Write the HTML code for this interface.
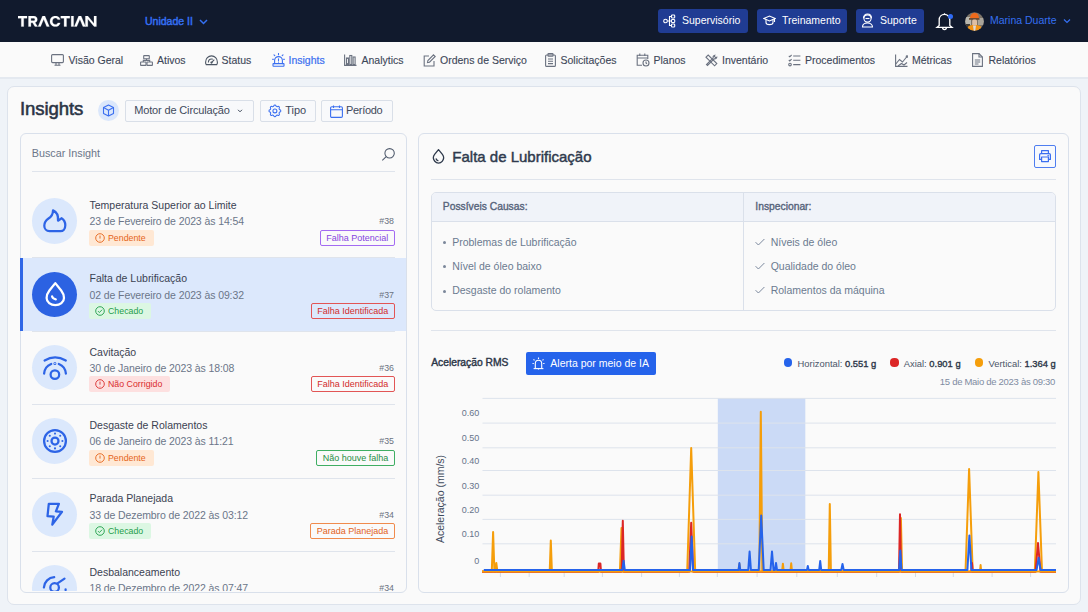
<!DOCTYPE html>
<html><head><meta charset="utf-8">
<style>
*{box-sizing:border-box;margin:0;padding:0}
html,body{width:1088px;height:612px;overflow:hidden}
body{font-family:"Liberation Sans",sans-serif;background:#eff3f8;position:relative;color:#374151}
.abs{position:absolute}
.t{position:absolute;white-space:nowrap;line-height:1}
#hdr{position:absolute;left:0;top:0;width:1088px;height:42px;background:#111a2d}
#nav{position:absolute;left:0;top:42px;width:1088px;height:37px;background:#fafafa;border-bottom:2px solid #e4e9f0}
.nvt{top:12.5px;font-size:10.5px;color:#3d4759;-webkit-text-stroke:0.12px #3d4759}
.hbtn{position:absolute;top:9px;height:24px;background:#203c93;border-radius:3px}
#card{position:absolute;left:7px;top:86px;width:1074px;height:518.5px;background:#fafafa;border:1px solid #dde3ec;border-radius:7px}
#lp{position:absolute;left:20px;top:133px;width:387px;height:459.5px;background:#fafafa;border:1px solid #d9e0eb;border-radius:6px;overflow:hidden}
#rp{position:absolute;left:418px;top:133px;width:650.5px;height:459.5px;background:#fafafa;border:1px solid #d9e0eb;border-radius:6px}
.btnb{background:#f8f9fb;border:1px solid #d9dfe8;border-radius:2px}
.bdg{display:flex;align-items:center;padding:0 8px 0 6px;font-size:8.8px;border-radius:2px;white-space:nowrap}
.tag{display:flex;align-items:center;padding:0 5.5px;font-size:9px;border:1px solid;border-radius:2px;white-space:nowrap;background:transparent}
</style></head><body>
<div id="hdr">
<svg class="abs" style="left:18px;top:16px" width="79" height="11" viewBox="0 0 79 11" fill="#fff" stroke="#fff" stroke-width="0.25">
<path d="M0 0H9V2.2H5.7V10.5H3.3V2.2H0Z"/>
<path d="M10.5 0H15.6C17.9 0 19.3 1.3 19.3 3.4C19.3 5 18.4 6.1 17 6.5L19.6 10.5H16.9L14.6 6.8H12.9V10.5H10.5ZM12.9 2.2V4.7H15.4C16.4 4.7 16.9 4.2 16.9 3.4C16.9 2.7 16.4 2.2 15.4 2.2Z"/>
<path d="M24.5 0H26.9L31.3 10.5H28.7L25.7 3.2L22.6 10.5H20.1Z"/>
<path d="M37.3 -0.1C39.9 -0.1 41.7 1.3 42.2 3.6H39.7C39.3 2.6 38.5 2.1 37.3 2.1C35.5 2.1 34.4 3.4 34.4 5.25C34.4 7.1 35.5 8.4 37.3 8.4C38.5 8.4 39.3 7.9 39.7 6.9H42.2C41.7 9.2 39.9 10.6 37.3 10.6C34.2 10.6 32 8.4 32 5.25C32 2.1 34.2 -0.1 37.3 -0.1Z"/>
<path d="M42.8 0H51.8V2.2H48.5V10.5H46.1V2.2H42.8Z"/>
<path d="M53.2 0H55.6V10.5H53.2Z"/>
<path d="M60.7 0H63.1L67.5 10.5H64.9L61.9 3.2L58.8 10.5H56.3Z"/>
<path d="M67.4 0H69.8L76 7.6V0H78.4V10.5H76.1L69.8 2.9V10.5H67.4Z"/>
</svg>
<span class="t" style="left:145px;top:16.2px;font-size:10.5px;color:#3570f2;-webkit-text-stroke:0.45px #3570f2">Unidade II</span>
<svg class="abs" style="left:199px;top:19px" width="9" height="6" viewBox="0 0 9 6"><path d="M1 1L4.5 4.5L8 1" stroke="#3570f2" stroke-width="1.5" fill="none"/></svg>

<div class="hbtn" style="left:658px;width:90px"></div>
<svg class="abs" style="left:663px;top:14px" width="13" height="14" viewBox="0 0 13 14" fill="none" stroke="#fff" stroke-width="1.1"><circle cx="2.5" cy="7" r="1.8"/><rect x="8.5" y="1" width="3.2" height="3" rx="0.8"/><rect x="8.5" y="5.5" width="3.2" height="3" rx="0.8"/><rect x="8.5" y="10" width="3.2" height="3" rx="0.8"/><path d="M4.3 7H8.5M6.5 7V2.5H8.5M6.5 7V11.5H8.5"/></svg>
<span class="t" style="left:682px;top:15.3px;font-size:10.5px;color:#fff">Supervisório</span>

<div class="hbtn" style="left:757px;width:90px"></div>
<svg class="abs" style="left:763px;top:14px" width="13" height="13" viewBox="0 0 13 13" fill="none" stroke="#fff" stroke-width="1.1"><path d="M0.8 4.5L6.5 2L12.2 4.5L6.5 7Z"/><path d="M3 5.6V8.5C3 9.8 4.6 10.6 6.5 10.6C8.4 10.6 10 9.8 10 8.5V5.6"/><path d="M11.5 4.8V8"/></svg>
<span class="t" style="left:782px;top:15.3px;font-size:10.5px;color:#fff">Treinamento</span>

<div class="hbtn" style="left:856px;width:68px"></div>
<svg class="abs" style="left:861px;top:13px" width="13" height="15" viewBox="0 0 13 15" fill="none" stroke="#fff" stroke-width="1.1"><circle cx="6.5" cy="5.5" r="3.6"/><path d="M2.5 5.2C2.5 2.6 4.3 1 6.5 1C8.7 1 10.5 2.6 10.5 5.2"/><path d="M4.5 5.5H8.5"/><path d="M1.5 14C1.5 11.5 3.5 10 6.5 10C9.5 10 11.5 11.5 11.5 14Z"/></svg>
<span class="t" style="left:880px;top:15.3px;font-size:10.5px;color:#fff">Suporte</span>

<svg class="abs" style="left:935px;top:11px" width="20" height="20" viewBox="0 0 20 20" fill="none" stroke="#fff" stroke-width="1.3"><path d="M9.5 2.2V3.2M4.2 14.5V9C4.2 5.8 6.5 3.4 9.5 3.4C12.5 3.4 14.8 5.8 14.8 9V14.5L17 16.3H2L4.2 14.5Z"/><path d="M7.6 16.5C7.6 17.8 8.4 18.6 9.5 18.6C10.6 18.6 11.4 17.8 11.4 16.5"/></svg>
<div class="abs" style="left:948px;top:14px;width:5px;height:5px;border-radius:50%;background:#2f6bf5"></div>

<svg class="abs" style="left:965.3px;top:11.6px" width="19" height="19" viewBox="0 0 19 19"><defs><clipPath id="avc"><circle cx="9.5" cy="9.5" r="9.3"/></clipPath></defs><g clip-path="url(#avc)">
<rect width="19" height="19" fill="#7d7468"/>
<rect x="0" y="5" width="6" height="8" fill="#b9b7ae"/>
<rect x="13" y="6" width="6" height="7" fill="#a9a49a"/>
<rect x="0" y="12" width="5" height="4" fill="#3d3a36"/>
<path d="M5 6.5C5 3 7 1 10 1C12.5 1 14 3 14 6.5Z" fill="#ee6a1c"/>
<rect x="4" y="6" width="10.5" height="1.8" fill="#6a4a32"/>
<rect x="7.2" y="7.5" width="4.8" height="6.5" rx="1.5" fill="#dfbfa4"/>
<path d="M2 19L3.5 14L7.5 13H11.5L15.5 14L17.5 19Z" fill="#f39416"/>
<path d="M8 13.5H11L10.2 19H8.8Z" fill="#d9d9de"/>
</g></svg>
<span class="t" style="left:990px;top:15.3px;font-size:10.5px;color:#3570f2">Marina Duarte</span>
<svg class="abs" style="left:1063px;top:18px" width="8" height="6" viewBox="0 0 8 6"><path d="M1 1.5L4 4.5L7 1.5" stroke="#3570f2" stroke-width="1.2" fill="none"/></svg>
</div>

<div id="nav">
<!-- monitor -->
<svg class="abs" style="left:51px;top:12px" width="13" height="12" viewBox="0 0 13 12" fill="none" stroke="#6b7280" stroke-width="1.1"><rect x="0.6" y="0.6" width="11.8" height="8" rx="1"/><path d="M5 8.8V11M8 8.8V11M3.5 11.3H9.5"/></svg>
<span class="t nvt" style="left:68.5px">Visão Geral</span>
<!-- ativos -->
<svg class="abs" style="left:139.5px;top:12.5px" width="13" height="11" viewBox="0 0 13 11" fill="none" stroke="#6b7280" stroke-width="1.1"><rect x="3.7" y="0.6" width="5.6" height="3.2" rx="0.4"/><rect x="0.6" y="7" width="5.4" height="3.4" rx="0.4"/><rect x="7" y="7" width="5.4" height="3.4" rx="0.4"/><path d="M6.5 3.8V5.4H3.3V7M6.5 5.4H9.7V7"/></svg>
<span class="t nvt" style="left:157px">Ativos</span>
<!-- status gauge -->
<svg class="abs" style="left:204.5px;top:13px" width="13" height="11" viewBox="0 0 13 11" fill="none" stroke="#4b5563" stroke-width="1.1"><path d="M1.2 9.6C0.8 8.9 0.6 8.1 0.6 7.2C0.6 3.6 3.3 0.9 6.5 0.9C9.7 0.9 12.4 3.6 12.4 7.2C12.4 8.1 12.2 8.9 11.8 9.6Z"/><path d="M3.4 7.6C3.4 5.6 4.8 4 6.5 4C7 4 7.4 4.1 7.8 4.3"/><path d="M6.5 7.6L9.3 4.6"/><circle cx="6.5" cy="7.6" r="0.6" fill="#4b5563"/></svg>
<span class="t nvt" style="left:221.5px">Status</span>
<!-- insights alarm -->
<svg class="abs" style="left:271.5px;top:53px;top:11px" width="13" height="14" viewBox="0 0 13 14" fill="none" stroke="#3b6ff0" stroke-width="1.1" stroke-linecap="round"><rect x="1" y="10.6" width="11" height="2.6" rx="0.4"/><path d="M2.6 10.6V7.6C2.6 5.3 4.3 3.6 6.5 3.6C8.7 3.6 10.4 5.3 10.4 7.6V10.6"/><path d="M6.5 5.8V7.6M6.5 9V9.1"/><path d="M6.5 0.5V1.7M2 1.8L2.8 2.6M11 1.8L10.2 2.6M0.5 6.2H1.5M11.5 6.2H12.5"/></svg>
<span class="t nvt" style="left:288.5px;color:#3b6ff0;-webkit-text-stroke:0.2px #3b6ff0">Insights</span>
<!-- analytics -->
<svg class="abs" style="left:344px;top:12px" width="13" height="12" viewBox="0 0 13 12" fill="none" stroke="#6b7280" stroke-width="1.1"><path d="M0.6 0.5V11.4H12.5"/><rect x="2.5" y="4" width="2" height="6.5"/><rect x="5.8" y="1.5" width="2" height="9"/><rect x="9.1" y="3" width="2" height="7.5"/></svg>
<span class="t nvt" style="left:361.5px">Analytics</span>
<!-- ordens -->
<svg class="abs" style="left:423px;top:12px" width="13" height="13" viewBox="0 0 13 13" fill="none" stroke="#6b7280" stroke-width="1.1"><path d="M6 2H1.2V12H11V7"/><path d="M10.5 0.8L12.2 2.5L6.5 8.2L4.5 8.6L4.9 6.6Z"/></svg>
<span class="t nvt" style="left:440px">Ordens de Serviço</span>
<!-- solicitações clipboard -->
<svg class="abs" style="left:545px;top:11px" width="11" height="14" viewBox="0 0 11 14" fill="none" stroke="#6b7280" stroke-width="1.1"><rect x="0.6" y="2" width="9.8" height="11.4" rx="1"/><rect x="3" y="0.6" width="5" height="2.6" rx="0.5"/><path d="M3 6H8M3 8.3H8M3 10.6H8"/></svg>
<span class="t nvt" style="left:560.5px">Solicitações</span>
<!-- planos calendar clock -->
<svg class="abs" style="left:636px;top:11px" width="14" height="14" viewBox="0 0 14 14" fill="none" stroke="#6b7280" stroke-width="1.1"><path d="M6 12.2H1.2V2.2H11.8V6"/><path d="M1.2 5H11.8M3.8 0.6V3M8.8 0.6V3"/><circle cx="10" cy="10" r="3"/><path d="M10 8.6V10L11 10.8"/></svg>
<span class="t nvt" style="left:653.5px">Planos</span>
<!-- inventario tools -->
<svg class="abs" style="left:705px;top:12px" width="13" height="13" viewBox="0 0 13 13" fill="none" stroke="#6b7280" stroke-width="1.1"><path d="M1 3.2L3.2 1L11.8 9.6L9.6 11.8Z"/><path d="M9.8 1.2A2 2 0 0 0 8.2 3.8L1.5 10.5L2.5 11.5L9.2 4.8A2 2 0 0 0 11.8 3.2L10.6 3.6L9.4 2.4Z"/></svg>
<span class="t nvt" style="left:722px">Inventário</span>
<!-- procedimentos -->
<svg class="abs" style="left:788px;top:12px" width="13" height="13" viewBox="0 0 13 13" fill="none" stroke="#6b7280" stroke-width="1.1"><path d="M0.8 1.8L1.8 2.8L3.6 1M5.2 2H12.4M0.8 6L1.8 7L3.6 5.2M5.2 6.3H12.4M5.2 10.6H12.4"/><circle cx="2" cy="10.6" r="1.3"/></svg>
<span class="t nvt" style="left:805px">Procedimentos</span>
<!-- metricas -->
<svg class="abs" style="left:895px;top:12px" width="13" height="13" viewBox="0 0 13 13" fill="none" stroke="#6b7280" stroke-width="1.1"><path d="M0.6 0.5V12.4H12.5"/><path d="M0.8 10L4.5 5.5L7.5 8L12 2.5"/><path d="M3 12L6.5 9.5L9 11L12 8.5"/><circle cx="12" cy="2.5" r="0.8"/></svg>
<span class="t nvt" style="left:912px">Métricas</span>
<!-- relatorios -->
<svg class="abs" style="left:972px;top:11px" width="11" height="14" viewBox="0 0 11 14" fill="none" stroke="#6b7280" stroke-width="1.1"><path d="M0.6 0.6H7L10.4 4V13.4H0.6Z"/><path d="M7 0.6V4H10.4"/><path d="M2.8 7H8.2M2.8 9H8.2M2.8 11H6.5"/></svg>
<span class="t nvt" style="left:988.5px">Relatórios</span>
</div>

<div id="card"></div>
<div id="lp"></div>
<!--LPC--><div id="lpc" class="abs" style="left:0;top:0;width:1088px;height:591.3px;overflow:hidden">
<span class="t" style="left:20px;top:99.96px;font-size:18.6px;font-weight:400;color:#2b3445;-webkit-text-stroke:0.55px #2b3445;letter-spacing:-0.1px">Insights</span>
<div class="abs" style="left:98px;top:100px;width:21px;height:21px;border-radius:50%;background:#dbe7fb"></div>
<svg class="abs" style="left:102px;top:104px" width="13" height="13" viewBox="0 0 13 13" fill="none" stroke="#3b6ff0" stroke-width="1.1" stroke-linejoin="round"><path d="M6.5 1L11.5 3.6V9.4L6.5 12L1.5 9.4V3.6Z"/><path d="M1.5 3.6L6.5 6.2L11.5 3.6M6.5 6.2V12"/></svg>
<div class="abs btnb" style="left:125px;top:99.5px;width:129px;height:22px"></div>
<span class="t" style="left:134.2px;top:104.69px;font-size:11px;font-weight:400;color:#3f4a5c;letter-spacing:-0.15px">Motor de Circulação</span>
<svg class="abs" style="left:236.5px;top:108.5px" width="6" height="4" viewBox="0 0 6 4"><path d="M1 0.8L3 2.8L5 0.8" stroke="#3f4a5c" stroke-width="1" fill="none"/></svg>
<div class="abs btnb" style="left:260px;top:99.5px;width:56px;height:22px"></div>
<svg class="abs" style="left:267.2px;top:103.3px" width="15.8" height="15.8" viewBox="0 0 24 24" fill="none" stroke="#3b6ff0" stroke-width="1.6" stroke-linecap="round" stroke-linejoin="round"><path d="M10.325 4.317c.426 -1.756 2.924 -1.756 3.35 0a1.724 1.724 0 0 0 2.573 1.066c1.543 -.94 3.31 .826 2.37 2.37a1.724 1.724 0 0 0 1.065 2.572c1.756 .426 1.756 2.924 0 3.35a1.724 1.724 0 0 0 -1.066 2.573c.94 1.543 -.826 3.31 -2.37 2.37a1.724 1.724 0 0 0 -2.572 1.065c-.426 1.756 -2.924 1.756 -3.35 0a1.724 1.724 0 0 0 -2.573 -1.066c-1.543 .94 -3.31 -.826 -2.37 -2.37a1.724 1.724 0 0 0 -1.065 -2.572c-1.756 -.426 -1.756 -2.924 0 -3.35a1.724 1.724 0 0 0 1.066 -2.573c-.94 -1.543 .826 -3.31 2.37 -2.37c1 .608 2.296 .07 2.572 -1.065z"/><circle cx="12" cy="12" r="3"/></svg>
<span class="t" style="left:285.2px;top:104.59px;font-size:11px;font-weight:400;color:#3f4a5c;">Tipo</span>
<div class="abs btnb" style="left:321px;top:99.5px;width:72px;height:22px"></div>
<svg class="abs" style="left:330px;top:104.5px" width="13" height="13" viewBox="0 0 13 13" fill="none" stroke="#3b6ff0" stroke-width="1.1"><rect x="0.6" y="1.8" width="11.8" height="10.6" rx="1.2"/><path d="M0.6 4.8H12.4M3.5 0.4V3M9.5 0.4V3"/></svg>
<span class="t" style="left:346px;top:104.59px;font-size:11px;font-weight:400;color:#3f4a5c;letter-spacing:-0.3px">Período</span>
<span class="t" style="left:31.7px;top:148.16px;font-size:10.8px;font-weight:400;color:#6b7689;letter-spacing:0px">Buscar Insight</span>
<svg class="abs" style="left:381px;top:146.5px" width="14" height="14" viewBox="0 0 14 14" fill="none" stroke="#4f5a6c" stroke-width="1.05"><circle cx="8.6" cy="6.3" r="4.7"/><path d="M5.2 9.6L1.3 13.3"/></svg>
<div class="abs" style="left:31.5px;top:171px;width:363px;height:1px;background:#dfe4ec"></div>
<div class="abs" style="left:20px;top:257.6px;width:386px;height:73.3px;background:#dce8fc"></div>
<div class="abs" style="left:20px;top:257.6px;width:3px;height:73.3px;background:#2f66e6"></div>
<div class="abs" style="left:31.75px;top:198.05px;width:45.5px;height:45.5px;border-radius:50%;background:#dbe8fc"></div>
<svg class="abs" style="left:27.50px;top:193.80px" width="54" height="54" viewBox="-27 -27 54 54" fill="none" stroke="#2d64e6" stroke-width="2.25" stroke-linecap="round" stroke-linejoin="round"><path d="M-2 -10.6C1 -9.3 3.5 -5.8 3 -0.3C4.5 -1.3 6 -2.3 6.5 -2.8C9 -1.3 10.3 1.7 10.3 4.2C10.3 8.2 8 10.2 5.5 10.2H-5.5C-8.5 10.2 -10.7 7.7 -10.7 4.7C-10.7 1.2 -8.7 -1 -6.5 -2.5C-3.5 -4.5 -2 -7.3 -2 -10.6Z"/></svg>
<span class="t" style="left:89.5px;top:199.71px;font-size:10.5px;font-weight:400;color:#3a4252;">Temperatura Superior ao Limite</span>
<span class="t" style="left:89.5px;top:216.01px;font-size:10.5px;font-weight:400;color:#6b7689;letter-spacing:-0.1px">23 de Fevereiro de 2023 às 14:54</span>
<span class="t" style="right:694px;top:217.05px;font-size:8.8px;color:#6b7280">#38</span>
<div class="abs bdg" style="left:89px;top:229.60px;height:16px;background:#ffe8d4;color:#e5641a"><svg width="10" height="10" viewBox="0 0 10 10" fill="none" stroke="#e5641a" stroke-width="0.9" style="margin-right:3px"><circle cx="5" cy="5" r="4.3"/><path d="M5 2.6V5.6M5 7V7.4"/></svg>Pendente</div>
<div class="abs tag" style="right:693.3px;top:229.50px;height:16.2px;border-color:#a36bf2;color:#8646e0">Falha Potencial</div>
<div class="abs" style="left:31.5px;top:257.40px;width:363px;height:1px;background:#dfe4ec"></div>
<div class="abs" style="left:31.75px;top:271.55px;width:45.5px;height:45.5px;border-radius:50%;background:#2c62e2"></div>
<svg class="abs" style="left:27.50px;top:267.30px" width="54" height="54" viewBox="-27 -27 54 54" fill="none" stroke="#fff" stroke-width="2.25" stroke-linecap="round" stroke-linejoin="round"><path d="M0.3 -10.9L6.2 -3.5C8.5 -0.5 9 2.5 9 4C9 8.3 5 11.2 0.3 11.2C-4.4 11.2 -8.4 8.3 -8.4 4C-8.4 2.5 -7.9 -0.5 -5.6 -3.5Z"/><path d="M-2.9 2.4C-2.6 3.9 -1.2 5 0.8 5.3"/></svg>
<span class="t" style="left:89.5px;top:273.21px;font-size:10.5px;font-weight:400;color:#3a4252;">Falta de Lubrificação</span>
<span class="t" style="left:89.5px;top:289.51px;font-size:10.5px;font-weight:400;color:#6b7689;letter-spacing:-0.1px">02 de Fevereiro de 2023 às 09:32</span>
<span class="t" style="right:694px;top:290.55px;font-size:8.8px;color:#6b7280">#37</span>
<div class="abs bdg" style="left:89px;top:303.10px;height:16px;background:#dcf7e3;color:#1f9d4a"><svg width="10" height="10" viewBox="0 0 10 10" fill="none" stroke="#1f9d4a" stroke-width="0.9" style="margin-right:3px"><circle cx="5" cy="5" r="4.3"/><path d="M3 5.1L4.4 6.5L7.1 3.7"/></svg>Checado</div>
<div class="abs tag" style="right:693.3px;top:303.00px;height:16.2px;border-color:#e25555;color:#d22c2c">Falha Identificada</div>
<div class="abs" style="left:31.5px;top:330.90px;width:363px;height:1px;background:#dfe4ec"></div>
<div class="abs" style="left:31.75px;top:344.85px;width:45.5px;height:45.5px;border-radius:50%;background:#dbe8fc"></div>
<svg class="abs" style="left:27.50px;top:340.60px" width="54" height="54" viewBox="-27 -27 54 54" fill="none" stroke="#2d64e6" stroke-width="2.25" stroke-linecap="round" stroke-linejoin="round"><path d="M-10.4 -7.5Q0 -13.7 10.8 -7.5"/><path d="M-10.9 5.7A11.3 11.3 0 0 1 -3.8 -4M3.8 -4A11.3 11.3 0 0 1 10.9 5.7"/><circle cx="-0.1" cy="-4.6" r="0.4" stroke-width="2.2"/><circle cx="-0.1" cy="6.6" r="4.3"/></svg>
<span class="t" style="left:89.5px;top:346.51px;font-size:10.5px;font-weight:400;color:#3a4252;">Cavitação</span>
<span class="t" style="left:89.5px;top:362.81px;font-size:10.5px;font-weight:400;color:#6b7689;letter-spacing:-0.1px">30 de Janeiro de 2023 às 18:08</span>
<span class="t" style="right:694px;top:363.85px;font-size:8.8px;color:#6b7280">#36</span>
<div class="abs bdg" style="left:89px;top:376.40px;height:16px;background:#fde0e0;color:#d92d2d"><svg width="10" height="10" viewBox="0 0 10 10" fill="none" stroke="#d92d2d" stroke-width="0.9" style="margin-right:3px"><circle cx="5" cy="5" r="4.3"/><path d="M5 2.6V5.6M5 7V7.4"/></svg>Não Corrigido</div>
<div class="abs tag" style="right:693.3px;top:376.30px;height:16.2px;border-color:#e25555;color:#d22c2c">Falha Identificada</div>
<div class="abs" style="left:31.5px;top:404.20px;width:363px;height:1px;background:#dfe4ec"></div>
<div class="abs" style="left:31.75px;top:418.25px;width:45.5px;height:45.5px;border-radius:50%;background:#dbe8fc"></div>
<svg class="abs" style="left:27.50px;top:414.00px" width="54" height="54" viewBox="-27 -27 54 54" fill="none" stroke="#2d64e6" stroke-width="2.25" stroke-linecap="round" stroke-linejoin="round"><circle cx="0" cy="0" r="10.9"/><circle cx="0" cy="0" r="3.5"/><circle cx="7.40" cy="0.00" r="1.05" fill="#2d64e6" stroke="none"/><circle cx="5.23" cy="5.23" r="1.05" fill="#2d64e6" stroke="none"/><circle cx="0.00" cy="7.40" r="1.05" fill="#2d64e6" stroke="none"/><circle cx="-5.23" cy="5.23" r="1.05" fill="#2d64e6" stroke="none"/><circle cx="-7.40" cy="0.00" r="1.05" fill="#2d64e6" stroke="none"/><circle cx="-5.23" cy="-5.23" r="1.05" fill="#2d64e6" stroke="none"/><circle cx="-0.00" cy="-7.40" r="1.05" fill="#2d64e6" stroke="none"/><circle cx="5.23" cy="-5.23" r="1.05" fill="#2d64e6" stroke="none"/></svg>
<span class="t" style="left:89.5px;top:419.91px;font-size:10.5px;font-weight:400;color:#3a4252;">Desgaste de Rolamentos</span>
<span class="t" style="left:89.5px;top:436.21px;font-size:10.5px;font-weight:400;color:#6b7689;letter-spacing:-0.1px">06 de Janeiro de 2023 às 11:21</span>
<span class="t" style="right:694px;top:437.25px;font-size:8.8px;color:#6b7280">#35</span>
<div class="abs bdg" style="left:89px;top:449.80px;height:16px;background:#ffe8d4;color:#e5641a"><svg width="10" height="10" viewBox="0 0 10 10" fill="none" stroke="#e5641a" stroke-width="0.9" style="margin-right:3px"><circle cx="5" cy="5" r="4.3"/><path d="M5 2.6V5.6M5 7V7.4"/></svg>Pendente</div>
<div class="abs tag" style="right:693.3px;top:449.70px;height:16.2px;border-color:#3fae63;color:#1f8f45">Não houve falha</div>
<div class="abs" style="left:31.5px;top:477.60px;width:363px;height:1px;background:#dfe4ec"></div>
<div class="abs" style="left:31.75px;top:491.65px;width:45.5px;height:45.5px;border-radius:50%;background:#dbe8fc"></div>
<svg class="abs" style="left:27.50px;top:487.40px" width="54" height="54" viewBox="-27 -27 54 54" fill="none" stroke="#2d64e6" stroke-width="2.25" stroke-linecap="round" stroke-linejoin="round"><path d="M-6.2 -10.2H3.9L0.9 -2.7L7 -2.2L-2.7 10.6L-1.3 2.6L-7.5 2.2Z"/></svg>
<span class="t" style="left:89.5px;top:493.31px;font-size:10.5px;font-weight:400;color:#3a4252;">Parada Planejada</span>
<span class="t" style="left:89.5px;top:509.61px;font-size:10.5px;font-weight:400;color:#6b7689;letter-spacing:-0.1px">33 de Dezembro de 2022 às 03:12</span>
<span class="t" style="right:694px;top:510.65px;font-size:8.8px;color:#6b7280">#34</span>
<div class="abs bdg" style="left:89px;top:523.20px;height:16px;background:#dcf7e3;color:#1f9d4a"><svg width="10" height="10" viewBox="0 0 10 10" fill="none" stroke="#1f9d4a" stroke-width="0.9" style="margin-right:3px"><circle cx="5" cy="5" r="4.3"/><path d="M3 5.1L4.4 6.5L7.1 3.7"/></svg>Checado</div>
<div class="abs tag" style="right:693.3px;top:523.10px;height:16.2px;border-color:#f08b4d;color:#e2621c">Parada Planejada</div>
<div class="abs" style="left:31.5px;top:551.00px;width:363px;height:1px;background:#dfe4ec"></div>
<div class="abs" style="left:31.75px;top:565.05px;width:45.5px;height:45.5px;border-radius:50%;background:#dbe8fc"></div>
<svg class="abs" style="left:27.50px;top:560.80px" width="54" height="54" viewBox="-27 -27 54 54" fill="none" stroke="#2d64e6" stroke-width="2.25" stroke-linecap="round" stroke-linejoin="round"><path d="M-11.1 -0.5A11 11 0 0 1 -0.8 -10.8"/><circle cx="-0.4" cy="-0.5" r="4.3"/><path d="M2.5 -4.6L9.5 -9.4"/><path d="M10.6 1.3V2.1"/></svg>
<span class="t" style="left:89.5px;top:566.71px;font-size:10.5px;font-weight:400;color:#3a4252;">Desbalanceamento</span>
<span class="t" style="left:89.5px;top:583.01px;font-size:10.5px;font-weight:400;color:#6b7689;letter-spacing:-0.1px">18 de Dezembro de 2022 às 07:47</span>
<span class="t" style="right:694px;top:584.05px;font-size:8.8px;color:#6b7280">#34</span>
</div><!--/LPC-->
<div id="rp"></div>
<!--RPC--><svg class="abs" style="left:431px;top:148px" width="15" height="17" viewBox="0 0 15 17" fill="none" stroke="#2f3a4c" stroke-width="1.3" stroke-linecap="round" stroke-linejoin="round"><path d="M7.5 1.6L11.4 6.4C13 8.5 12.8 11.4 11.2 13.3C9.2 15.6 5.8 15.6 3.8 13.3C2.2 11.4 2 8.5 3.6 6.4Z"/><path d="M5.2 11C5.4 11.8 6 12.4 6.9 12.6"/></svg>
<span class="t" style="left:452.3px;top:148.80px;font-size:15px;font-weight:400;color:#2f3a4d;-webkit-text-stroke:0.45px #2f3a4d">Falta de Lubrificação</span>
<div class="abs" style="left:1033.5px;top:145px;width:22.5px;height:22.5px;border:1px solid #4f7ef0;border-radius:2px;background:#f7f9fd"></div>
<svg class="abs" style="left:1037.5px;top:149px" width="14" height="14" viewBox="0 0 14 14" fill="none" stroke="#3b6ff0" stroke-width="1.2" stroke-linejoin="round"><path d="M3.6 4.6V1.6H10.4V4.6"/><path d="M3.6 10.4H1.6V5.8C1.6 5.1 2.1 4.6 2.8 4.6H11.2C11.9 4.6 12.4 5.1 12.4 5.8V10.4H10.4"/><rect x="3.6" y="8" width="6.8" height="4.6"/><circle cx="10.3" cy="6.6" r="0.3" fill="#3b6ff0"/></svg>
<div class="abs" style="left:431px;top:179px;width:625px;height:1px;background:#dfe4ec"></div>
<div class="abs" style="left:430.8px;top:192.3px;width:625px;height:119.2px;border:1px solid #dae0ea;border-radius:5px;background:#fafafa;overflow:hidden"><div class="abs" style="left:0;top:0;width:100%;height:28.5px;background:#f0f3f9;border-bottom:1px solid #dae0ea"></div><div class="abs" style="left:311.5px;top:0;width:1px;height:100%;background:#dae0ea"></div></div>
<span class="t" style="left:442.8px;top:201.78px;font-size:10.3px;font-weight:400;color:#56637a;-webkit-text-stroke:0.35px #56637a">Possíveis Causas:</span>
<span class="t" style="left:755.3px;top:201.78px;font-size:10.3px;font-weight:400;color:#56637a;-webkit-text-stroke:0.35px #56637a">Inspecionar:</span>
<div class="abs" style="left:443px;top:241.30px;width:3px;height:3px;border-radius:50%;background:#7b879a"></div>
<span class="t" style="left:452.2px;top:236.91px;font-size:10.5px;font-weight:400;color:#6b7a90;">Problemas de Lubrificação</span>
<svg class="abs" style="left:755px;top:238.00px" width="10" height="8" viewBox="0 0 10 8" fill="none" stroke="#7b889c" stroke-width="1"><path d="M0.6 4.2L3.4 7L9.4 1"/></svg>
<span class="t" style="left:770.7px;top:236.91px;font-size:10.5px;font-weight:400;color:#6b7a90;">Níveis de óleo</span>
<div class="abs" style="left:443px;top:265.45px;width:3px;height:3px;border-radius:50%;background:#7b879a"></div>
<span class="t" style="left:452.2px;top:261.06px;font-size:10.5px;font-weight:400;color:#6b7a90;">Nível de óleo baixo</span>
<svg class="abs" style="left:755px;top:262.15px" width="10" height="8" viewBox="0 0 10 8" fill="none" stroke="#7b889c" stroke-width="1"><path d="M0.6 4.2L3.4 7L9.4 1"/></svg>
<span class="t" style="left:770.7px;top:261.06px;font-size:10.5px;font-weight:400;color:#6b7a90;">Qualidade do óleo</span>
<div class="abs" style="left:443px;top:289.60px;width:3px;height:3px;border-radius:50%;background:#7b879a"></div>
<span class="t" style="left:452.2px;top:285.21px;font-size:10.5px;font-weight:400;color:#6b7a90;">Desgaste do rolamento</span>
<svg class="abs" style="left:755px;top:286.30px" width="10" height="8" viewBox="0 0 10 8" fill="none" stroke="#7b889c" stroke-width="1"><path d="M0.6 4.2L3.4 7L9.4 1"/></svg>
<span class="t" style="left:770.7px;top:285.21px;font-size:10.5px;font-weight:400;color:#6b7a90;">Rolamentos da máquina</span>
<div class="abs" style="left:431px;top:330px;width:625px;height:1px;background:#dfe4ec"></div>
<span class="t" style="left:431.2px;top:358.38px;font-size:10.3px;font-weight:400;color:#2b3547;-webkit-text-stroke:0.4px #2b3547">Aceleração RMS</span>
<div class="abs" style="left:526px;top:351.6px;width:130px;height:23.6px;background:#2563eb;border-radius:2px"></div>
<svg class="abs" style="left:531.5px;top:357px" width="13" height="13" viewBox="0 0 13 13" fill="none" stroke="#fff" stroke-width="1.1" stroke-linejoin="round"><path d="M3.3 11.2V6.6C3.3 4.7 4.7 3.2 6.5 3.2C8.3 3.2 9.7 4.7 9.7 6.6V11.2"/><path d="M1.6 11.6H11.4"/><path d="M6.5 0.6V2M1.5 2.3L2.5 3.3M11.5 2.3L10.5 3.3M0.5 6.5H1.8M11.2 6.5H12.5M6.5 11.6V12.6"/></svg>
<span class="t" style="left:550.3px;top:358.21px;font-size:10.5px;font-weight:400;color:#ffffff;">Alerta por meio de IA</span>
<div class="abs" style="left:783.9px;top:358.4px;width:8.2px;height:8.2px;border-radius:50%;background:#2563eb"></div>
<span class="t" style="left:797.6px;top:358.94px;font-size:9.4px;color:#4b5568">Horizontal: <span style="color:#2b3547;-webkit-text-stroke:0.35px #2b3547">0.551 g</span></span>
<div class="abs" style="left:890.4px;top:358.4px;width:8.2px;height:8.2px;border-radius:50%;background:#dc2626"></div>
<span class="t" style="left:903.8px;top:358.94px;font-size:9.4px;color:#4b5568">Axial: <span style="color:#2b3547;-webkit-text-stroke:0.35px #2b3547">0.901 g</span></span>
<div class="abs" style="left:974.9px;top:358.4px;width:8.2px;height:8.2px;border-radius:50%;background:#f59e0b"></div>
<span class="t" style="left:988.5px;top:358.94px;font-size:9.4px;color:#4b5568">Vertical: <span style="color:#2b3547;-webkit-text-stroke:0.35px #2b3547">1.364 g</span></span>
<span class="t" style="left:939.8px;top:376.86px;font-size:9.5px;font-weight:400;color:#7f8ca2;letter-spacing:-0.29px">15 de Maio de 2023 às 09:30</span>
<svg class="abs" style="left:0;top:0" width="1088" height="612" viewBox="0 0 1088 612"><rect x="717.8" y="398" width="87.5" height="172" fill="#cbdaf6"/><line x1="482.5" y1="398.4" x2="1056" y2="398.4" stroke="#dde3ec" stroke-width="1"/><line x1="482.5" y1="423.1" x2="1056" y2="423.1" stroke="#dde3ec" stroke-width="1"/><line x1="482.5" y1="447.8" x2="1056" y2="447.8" stroke="#dde3ec" stroke-width="1"/><line x1="482.5" y1="470.5" x2="1056" y2="470.5" stroke="#dde3ec" stroke-width="1"/><line x1="482.5" y1="495.2" x2="1056" y2="495.2" stroke="#dde3ec" stroke-width="1"/><line x1="482.5" y1="519.4" x2="1056" y2="519.4" stroke="#dde3ec" stroke-width="1"/><line x1="482.5" y1="543.8" x2="1056" y2="543.8" stroke="#dde3ec" stroke-width="1"/><line x1="500.4" y1="571" x2="500.4" y2="577" stroke="#d5dbe5" stroke-width="1"/><line x1="529.2" y1="571" x2="529.2" y2="577" stroke="#d5dbe5" stroke-width="1"/><line x1="564.2" y1="571" x2="564.2" y2="577" stroke="#d5dbe5" stroke-width="1"/><line x1="602.4" y1="571" x2="602.4" y2="577" stroke="#d5dbe5" stroke-width="1"/><line x1="641.6" y1="571" x2="641.6" y2="577" stroke="#d5dbe5" stroke-width="1"/><line x1="679.4" y1="571" x2="679.4" y2="577" stroke="#d5dbe5" stroke-width="1"/><line x1="717.3" y1="571" x2="717.3" y2="577" stroke="#d5dbe5" stroke-width="1"/><line x1="757.1" y1="571" x2="757.1" y2="577" stroke="#d5dbe5" stroke-width="1"/><line x1="796.8" y1="571" x2="796.8" y2="577" stroke="#d5dbe5" stroke-width="1"/><line x1="837.3" y1="571" x2="837.3" y2="577" stroke="#d5dbe5" stroke-width="1"/><line x1="876.7" y1="571" x2="876.7" y2="577" stroke="#d5dbe5" stroke-width="1"/><line x1="915.5" y1="571" x2="915.5" y2="577" stroke="#d5dbe5" stroke-width="1"/><line x1="953.3" y1="571" x2="953.3" y2="577" stroke="#d5dbe5" stroke-width="1"/><line x1="992.1" y1="571" x2="992.1" y2="577" stroke="#d5dbe5" stroke-width="1"/><line x1="1030.6" y1="571" x2="1030.6" y2="577" stroke="#d5dbe5" stroke-width="1"/><polyline points="482.0,571.6 491.8,571.6 493.1,532.0 494.4,571.6 495.2,571.6 496.3,563.0 497.4,571.6 549.7,571.6 550.8,540.6 551.9,571.6 619.9,571.6 621.5,528.0 623.1,571.6 687.2,571.6 691.2,448.0 695.2,571.6 738.4,571.6 739.4,564.0 740.4,571.6 759.3,571.6 760.8,411.8 762.3,571.6 782.1,571.6 782.9,563.7 783.7,571.6 790.4,571.6 791.2,563.3 792.0,571.6 828.7,571.6 829.8,504.0 830.9,571.6 899.7,571.6 900.9,518.0 902.1,571.6 965.5,571.6 969.1,469.0 972.7,571.6 980.0,571.6 980.6,565.0 981.2,571.6 1034.8,571.6 1038.4,472.0 1042.0,571.6 1056.0,571.6" fill="none" stroke="#f59e0b" stroke-width="2" stroke-linejoin="round"/><polyline points="482.0,571.8 598.2,571.8 598.8,563.5 600.4,563.5 601.0,571.8 621.7,571.8 622.8,520.7 623.9,571.8 689.2,571.8 691.2,522.7 693.2,571.8 899.0,571.8 900.0,514.3 901.0,571.8 971.2,571.8 972.0,563.0 972.8,571.8 1035.5,571.8 1038.0,543.0 1040.5,571.8 1056.0,571.8" fill="none" stroke="#dc2626" stroke-width="2" stroke-linejoin="round"/><polyline points="482.0,571.6 1056.0,571.6" fill="none" stroke="#f59e0b" stroke-width="2"/><polyline points="483.8,569.9 622.4,569.9 623.6,560.7 624.8,569.9 690.1,569.9 691.6,536.6 693.1,569.9 738.6,569.9 739.4,563.0 740.2,569.9 748.3,569.9 749.6,551.6 750.9,569.9 758.7,569.9 761.2,515.5 763.7,569.9 770.5,569.9 772.0,551.6 773.5,569.9 775.0,569.9 776.0,563.0 777.0,569.9 807.0,569.9 807.8,566.0 808.6,569.9 819.2,569.9 820.2,561.0 821.2,569.9 841.3,569.9 842.5,564.0 843.7,569.9 899.1,569.9 900.3,550.6 901.5,569.9 967.4,569.9 969.4,535.4 971.4,569.9 1036.6,569.9 1038.6,557.8 1040.6,569.9 1056.0,569.9" fill="none" stroke="#2563eb" stroke-width="2" stroke-linejoin="round"/></svg>
<span class="t" style="right:608.7px;top:409.18px;font-size:9px;color:#67748a">0.60</span>
<span class="t" style="right:608.7px;top:434.18px;font-size:9px;color:#67748a">0.50</span>
<span class="t" style="right:608.7px;top:456.68px;font-size:9px;color:#67748a">0.40</span>
<span class="t" style="right:608.7px;top:481.98px;font-size:9px;color:#67748a">0.30</span>
<span class="t" style="right:608.7px;top:505.88px;font-size:9px;color:#67748a">0.20</span>
<span class="t" style="right:608.7px;top:530.38px;font-size:9px;color:#67748a">0.10</span>
<span class="t" style="right:608.7px;top:557.48px;font-size:9px;color:#67748a">0</span>
<span class="t" style="left:439.8px;top:498.5px;font-size:10.5px;color:#3f4a5c;transform:translate(-50%,-50%) rotate(-90deg);transform-origin:center">Aceleração (mm/s)</span>
<!--/RPC-->


</body></html>
